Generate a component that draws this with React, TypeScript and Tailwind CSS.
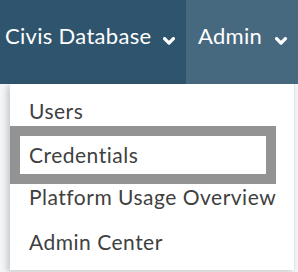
import React from "react";

function Chevron() {
  return (
    <svg width="12" height="8" viewBox="0 0 12 8" className="mt-[14px] shrink-0">
      <path d="M1.6 1.6 L6 6.1 L10.4 1.6" fill="none" stroke="white" strokeWidth="3.3" strokeLinecap="round" strokeLinejoin="round" />
    </svg>
  );
}

export default function App() {
  return (
    <div className="w-[298px] h-[272px] bg-[#f3f5f6] relative overflow-hidden" style={{ fontFamily: "Lato, 'Open Sans', sans-serif" }}>
      <div className="flex h-[84px] text-white text-[22px] leading-[26px] tracking-[0.3px]">
        <div className="w-[186px] bg-[#2f546d] flex items-start justify-between pt-[23px] pl-[5px] pr-[11px]">
          <span>Civis Database</span>
          <Chevron />
        </div>
        <div className="flex-1 bg-[#47697f] flex items-start justify-between pt-[23px] pl-[12px] pr-[11px]">
          <span>Admin</span>
          <Chevron />
        </div>
      </div>
      <div className="absolute left-[10px] top-[84px] w-[285px] h-[186px] bg-white shadow-[-3px_2px_6px_rgba(0,0,0,0.18)] border-r border-[#e4e4e4] flex flex-col text-[21px] leading-[24px] tracking-[0.5px] text-[#404040]">
        <div className="pt-[15px] pl-[19px]">Users</div>
        <div className="mt-[3px] w-[266px] border-[10px] border-[#939393] py-[7px] pl-[9px]">Credentials</div>
        <div className="mt-[1px] pl-[19px]">Platform Usage Overview</div>
        <div className="mt-[21px] pl-[19px]">Admin Center</div>
      </div>
    </div>
  );
}
